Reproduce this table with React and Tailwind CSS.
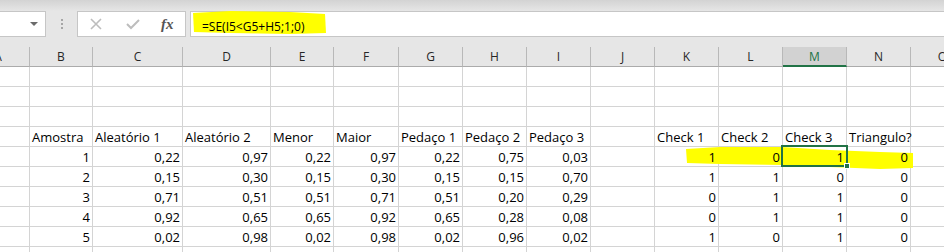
import React from "react";

const cols = [
  { id: "A", w: "w-[30px]" },
  { id: "B", w: "w-[63px]" },
  { id: "C", w: "w-[90px]" },
  { id: "D", w: "w-[88px]" },
  { id: "E", w: "w-[63px]" },
  { id: "F", w: "w-[65px]" },
  { id: "G", w: "w-[64px]" },
  { id: "H", w: "w-[64px]" },
  { id: "I", w: "w-[64px]" },
  { id: "J", w: "w-[64px]" },
  { id: "K", w: "w-[64px]" },
  { id: "L", w: "w-[64px]" },
  { id: "M", w: "w-[64px]" },
  { id: "N", w: "w-[64px]" },
  { id: "O", w: "w-[64px]" },
];

const dataCols = ["B", "C", "D", "E", "F", "G", "H", "I", "K", "L", "M", "N"];

const titles = ["Amostra", "Aleatório 1", "Aleatório 2", "Menor", "Maior", "Pedaço 1", "Pedaço 2", "Pedaço 3", "Check 1", "Check 2", "Check 3", "Triangulo?"];

const values = [
  ["1", "0,22", "0,97", "0,22", "0,97", "0,22", "0,75", "0,03", "1", "0", "1", "0"],
  ["2", "0,15", "0,30", "0,15", "0,30", "0,15", "0,15", "0,70", "1", "1", "0", "0"],
  ["3", "0,71", "0,51", "0,51", "0,71", "0,51", "0,20", "0,29", "0", "1", "1", "0"],
  ["4", "0,92", "0,65", "0,65", "0,92", "0,65", "0,28", "0,08", "0", "1", "1", "0"],
  ["5", "0,02", "0,98", "0,02", "0,98", "0,02", "0,96", "0,02", "1", "0", "1", "0"],
];

// linhas da planilha: 3 vazias, cabeçalho, 5 de dados, 1 vazia
const toRow = (arr, align) => {
  const r = {};
  dataCols.forEach((c, i) => (r[c] = { text: arr[i], align }));
  return r;
};
const rows = [{}, {}, {}, toRow(titles, "left"), ...values.map((v) => toRow(v, "right")), {}];

const ColHeader = ({ col }) => {
  const selected = col.id === "M";
  return (
    <div
      className={`${col.w} shrink-0 h-[20px] border-r border-[#b8b8b8] overflow-hidden ${
        selected ? "bg-[#d2d2d2] border-b-2 border-b-[#217346] text-[#217346]" : "border-b border-b-[#ababab] text-[#262626]"
      }`}
    >
      {col.id === "A" ? (
        <div className="w-[64px] ml-[-34px] text-center leading-[19px]">A</div>
      ) : (
        <div className="text-center leading-[19px]">{col.id}</div>
      )}
    </div>
  );
};

export default function App() {
  return (
    <div className="relative w-[944px] h-[252px] overflow-hidden bg-white" style={{ fontFamily: "'Open Sans', sans-serif" }}>
      {/* marcações de marca-texto */}
      <svg className="absolute left-0 top-0 pointer-events-none" width="944" height="252">
        <path d="M193 13 L230 11 L290 12 L325 14 L326 33 L290 34 L230 33 L194 32 Z" fill="#ffff00" />
        <path d="M686 149 L720 147 L782 147 L830 150 L880 152 L913 153 L913 168 L880 169 L830 167 L782 165 L720 164 L687 163 Z" fill="#ffff00" />
      </svg>

      {/* faixa da faixa de opções */}
      <div className="h-[11px] bg-linear-to-b from-[#d3d3d3] to-[#e6e6e6]" />

      {/* barra de fórmulas */}
      <div className="h-[26px] flex bg-[#e6e6e6]">
        <div className="w-[46px] shrink-0 bg-white border border-l-0 border-[#c6c6c6] flex items-center justify-end pr-[7px]">
          <div className="w-0 h-0 border-l-[4px] border-r-[4px] border-t-[4px] border-l-transparent border-r-transparent border-t-[#6b6b6b]" />
        </div>
        <div className="w-[31px] shrink-0 flex flex-col items-center justify-center gap-[2px]">
          <div className="w-[2px] h-[2px] bg-[#a6a6a6]" />
          <div className="w-[2px] h-[2px] bg-[#a6a6a6]" />
          <div className="w-[2px] h-[2px] bg-[#a6a6a6]" />
        </div>
        <div className="w-[109px] shrink-0 bg-white border border-[#c6c6c6] flex items-center">
          <svg className="ml-[12px]" width="12" height="12" viewBox="0 0 12 12">
            <path d="M1 1 L11 11 M11 1 L1 11" stroke="#bdbdbd" strokeWidth="1.6" fill="none" />
          </svg>
          <svg className="ml-[24px]" width="14" height="12" viewBox="0 0 14 12">
            <path d="M1 6 L5 10 L13 2" stroke="#bdbdbd" strokeWidth="2" fill="none" />
          </svg>
          <span
            className="ml-[21px] text-[15px] italic font-bold text-[#555555] leading-none"
            style={{ fontFamily: "'Liberation Serif', serif" }}
          >
            fx
          </span>
        </div>
        <div className="w-[4px] shrink-0" />
        <div className="flex-1 bg-white border border-r-0 border-[#c6c6c6] pl-[11px] pt-[1px]">
          <span className="relative text-[12px] leading-[22px] text-black">=SE(I5&lt;G5+H5;1;0)</span>
        </div>
      </div>

      <div className="h-[10px] bg-[#e6e6e6]" />

      {/* cabeçalhos de coluna */}
      <div className="flex bg-[#e6e6e6] text-[12px]">
        {cols.map((c) => (
          <ColHeader key={c.id} col={c} />
        ))}
      </div>

      {/* células */}
      {rows.map((row, ri) => (
        <div key={ri} className="flex text-[13px] text-black">
          {cols.map((c) => {
            const cell = row[c.id];
            return (
              <div
                key={c.id}
                className={`${c.w} shrink-0 h-[20px] border-r border-b border-[#d4d4d4] flex ${
                  cell && cell.align === "right" ? "justify-end pr-[2px]" : "justify-start pl-[2px]"
                }`}
              >
                {cell && <span className="relative leading-[19px] pt-[1px] whitespace-nowrap">{cell.text}</span>}
              </div>
            );
          })}
        </div>
      ))}

      {/* célula selecionada M5 */}
      <div className="absolute left-[781px] top-[145px] w-[67px] h-[22px] border-2 border-[#217346] pointer-events-none" />
      <div className="absolute left-[844px] top-[163px] w-[6px] h-[6px] bg-[#217346] border border-white pointer-events-none" />
    </div>
  );
}
